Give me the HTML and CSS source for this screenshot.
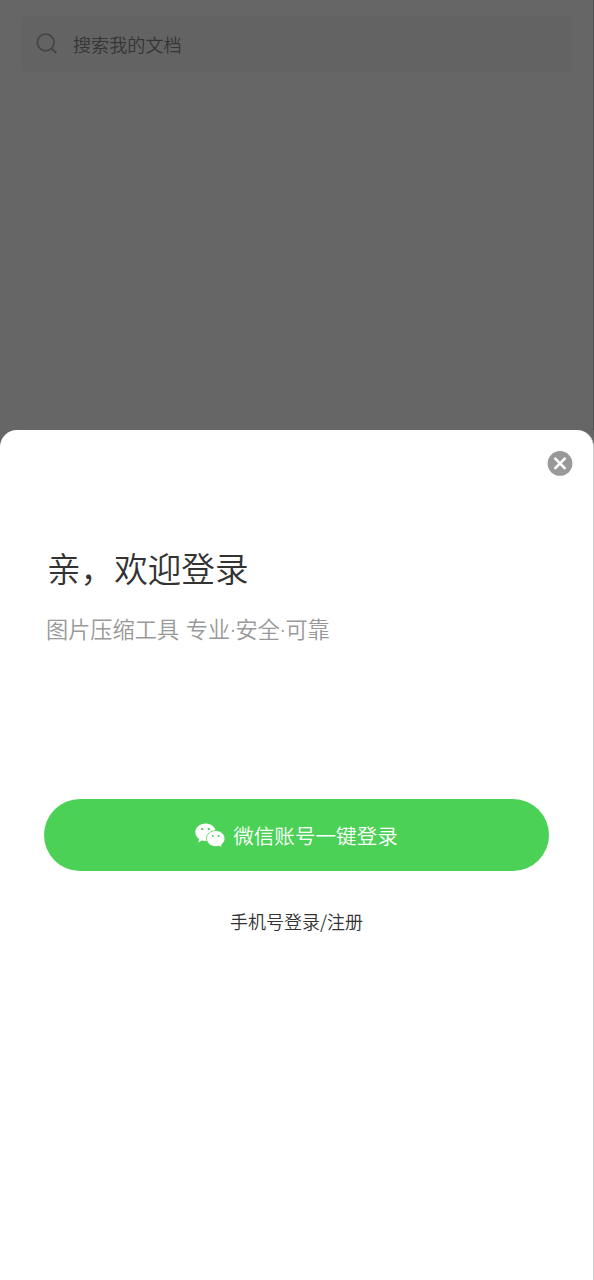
FILE: index.html
```html
<!DOCTYPE html>
<html lang="zh-CN">
<head>
<meta charset="utf-8">
<title>登录</title>
<link rel="stylesheet" href="styles.css">
</head>
<body>
<div class="screen">
  <header class="backdrop">
    <div class="search">
      <svg class="search-icon" viewBox="0 0 22 22"><circle cx="9.7" cy="9.5" r="8.3"/><path d="M15.6 15.5 20.5 20"/></svg>
      <span>搜索我的文档</span>
    </div>
  </header>
  <main class="sheet">
    <button class="close" aria-label="关闭">
      <svg viewBox="0 0 26 26"><circle cx="13" cy="13.4" r="12.4"/><path d="M8.3 8.7 17.7 18.1M17.7 8.7 8.3 18.1"/></svg>
    </button>
    <h1 class="title">亲，欢迎登录</h1>
    <p class="subtitle">图片压缩工具 专业<span class="dot">·</span>安全<span class="dot">·</span>可靠</p>
    <button class="wechat">
      <svg class="wechat-icon" viewBox="0 0 30 25">
        <path class="bubble" d="M10.600.5C4.900.5.3 4.400.3 9.300c0 2.800 1.500 5.200 3.900 6.800l-1 3.400 3.900-2c1.100.3 2.300.5 3.500.5 5.700 0 10.300-3.900 10.300-8.700S16.300.5 10.600.5Z"/>
        <path class="bubble front" d="M20.700 7.600c-5.100 0-9.200 3.600-9.200 8s4.100 8 9.200 8c1.100 0 2.200-.2 3.200-.5l3.200 1.500-.7-2.700c2.100-1.500 3.500-3.700 3.500-6.300 0-4.400-4.100-8-9.200-8Z"/>
        <g class="eyes"><circle cx="7.200" cy="6.100" r="1.200"/><circle cx="13.800" cy="6.100" r="1.200"/><circle cx="17.800" cy="13.100" r="1"/><circle cx="23.600" cy="13.100" r="1"/></g>
      </svg>
      <span>微信账号一键登录</span>
    </button>
    <a class="phone">手机号登录/注册</a>
  </main>
</div>
</body>
</html>
```
FILE: styles.css
```css
* { box-sizing: border-box; }
body {
  margin: 0;
  background: #666;
  font-family: "Noto Sans CJK SC", sans-serif;
  font-weight: 350;
}
button { border: 0; padding: 0; background: none; font: inherit; }
.screen {
  height: 1280px;
  display: flex;
  flex-direction: column;
  overflow: hidden;
}
.backdrop {
  height: 430px;
  padding: 16px 21px 0;
  border-right: 1px solid #505050;
}
.search {
  height: 56px;
  padding-left: 15px;
  border-radius: 6px;
  background: #636363;
  display: flex;
  align-items: center;
  gap: 15px;
  color: #353535;
  font-size: 18.100px;
  line-height: 26px;
}
.search-icon {
  width: 22px;
  height: 22px;
  fill: none;
  stroke: #454545;
  stroke-width: 1.800;
}
.sheet {
  flex: 1;
  display: flex;
  flex-direction: column;
  background: #fff;
  border-radius: 17px 17px 0 0;
  border-right: 1px solid #ccc;
}
.close {
  width: 26px;
  height: 26px;
  margin: 20px 20px 0 0;
  align-self: flex-end;
}
.close svg { display: block; fill: #999; }
.close path { stroke: #fff; stroke-width: 2.600; stroke-linecap: round; }
.title {
  margin: 68px 0 0 47px;
  font-size: 33.600px;
  font-weight: 350;
  line-height: 48px;
  color: #333;
}
.subtitle {
  margin: 20px 0 0 46px;
  font-size: 22.200px;
  line-height: 32px;
  color: #999;
  word-spacing: 1.700px;
}
.dot { font-family: "Noto Sans", sans-serif; line-height: 1; }
.wechat {
  width: 505px;
  height: 72px;
  margin: 155px 0 0 44px;
  border-radius: 36px;
  background: #4bd155;
  display: flex;
  align-items: center;
  justify-content: center;
  gap: 8px;
  color: #fff;
  font-size: 20.600px;
  line-height: 30px;
}
.wechat-icon { width: 30px; height: 25px; }
.bubble { fill: #fff; }
.front { stroke: #4bd155; stroke-width: .8; }
.eyes { fill: #4bd155; }
.phone {
  margin-top: 37px;
  align-self: center;
  font-size: 18px;
  line-height: 26px;
  color: #333;
}
```
